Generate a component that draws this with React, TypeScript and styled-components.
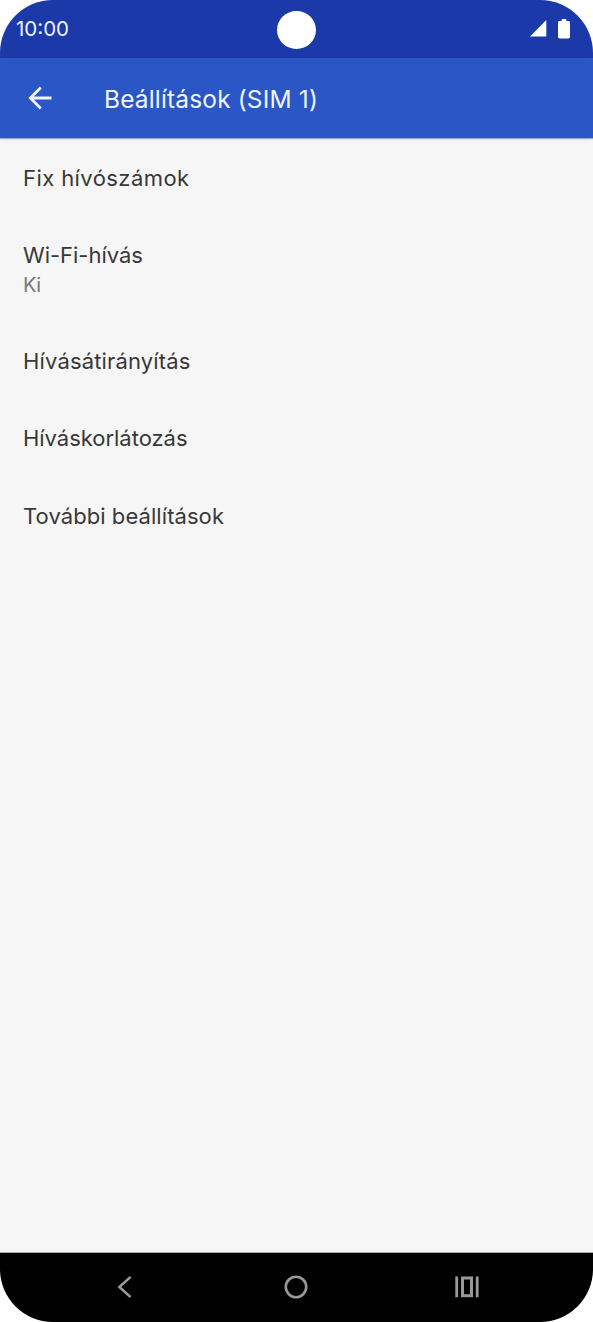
import React from "react";
import styled, { createGlobalStyle } from "styled-components";

interface MenuEntry {
  title: string;
  subtitle?: string;
  tracking: number;
}

const entries: MenuEntry[] = [
  { title: "Fix hívószámok", tracking: 0.42 },
  { title: "Wi-Fi-hívás", subtitle: "Ki", tracking: -0.02 },
  { title: "Hívásátirányítás", tracking: 0.15 },
  { title: "Híváskorlátozás", tracking: -0.03 },
  { title: "További beállítások", tracking: 0.07 },
];

export default function App() {
  return (
    <>
      <GlobalStyle />
      <Phone>
        <StatusBar>
          <Clock>10:00</Clock>
          <Camera />
          <StatusIcons>
            <svg width="17" height="17" viewBox="0 0 17 17" fill="#fff">
              <path d="M16.3 0V16.5H0Z" />
            </svg>
            <svg width="12" height="20" viewBox="0 0 12 20" fill="#fff">
              <path d="M3.7 0H8.3V2H10.6Q12 2 12 3.4V18Q12 19.4 10.6 19.4H1.4Q0 19.4 0 18V3.4Q0 2 1.4 2H3.7Z" />
            </svg>
          </StatusIcons>
        </StatusBar>

        <AppBar>
          <BackButton aria-label="Vissza">
            <svg width="24" height="24" viewBox="0 0 24 24" fill="none" stroke="#f0f5ff" strokeWidth="2.8">
              <path d="M23.5 12H3M12.8 1.6L2.4 12L12.8 22.4" />
            </svg>
          </BackButton>
          <Title>Beállítások (SIM 1)</Title>
        </AppBar>

        <Menu>
          {entries.map((entry) => (
            <MenuItem key={entry.title}>
              <ItemTitle $tracking={entry.tracking}>{entry.title}</ItemTitle>
              {entry.subtitle && <ItemSubtitle>{entry.subtitle}</ItemSubtitle>}
            </MenuItem>
          ))}
        </Menu>

        <NavBar>
          <NavButton aria-label="Vissza">
            <svg width="16" height="24" viewBox="0 0 16 24" fill="none" stroke="#999" strokeWidth="2.6">
              <path d="M13.6 1.9L2.4 12L13.6 22.1" />
            </svg>
          </NavButton>
          <NavButton aria-label="Kezdőlap">
            <svg width="24" height="24" viewBox="0 0 24 24" fill="none" stroke="#999" strokeWidth="2.6">
              <circle cx="12" cy="12" r="10.2" />
            </svg>
          </NavButton>
          <NavButton aria-label="Áttekintés">
            <svg width="24" height="22" viewBox="0 0 24 22" fill="none" stroke="#999">
              <path d="M1.7 0.5V21.2M22.2 0.5V21.2" strokeWidth="2.8" />
              <rect x="7.5" y="2" width="9" height="17.7" strokeWidth="3" />
            </svg>
          </NavButton>
        </NavBar>
      </Phone>
    </>
  );
}

const GlobalStyle = createGlobalStyle`
  body {
    margin: 0;
    background: #fff;
    font-family: Inter, "Open Sans", sans-serif;
  }
`;

const Phone = styled.div`
  display: flex;
  flex-direction: column;
  width: 593px;
  height: 1322px;
  overflow: hidden;
  border-radius: 53px;
  background: #f6f6f6;
`;

const StatusBar = styled.header`
  display: grid;
  grid-template-columns: 1fr 39px 1fr;
  align-items: center;
  flex: none;
  box-sizing: border-box;
  height: 58px;
  padding: 0 23px 0 16px;
  background: #1c39a9;
`;

const Clock = styled.span`
  font-size: 20.5px;
  line-height: 24px;
  color: #eef3ff;
`;

const Camera = styled.div`
  width: 39px;
  height: 38px;
  margin: 1px 0 0 3.5px;
  border-radius: 50%;
  background: #fff;
`;

const StatusIcons = styled.div`
  display: flex;
  align-items: center;
  justify-content: flex-end;
  gap: 11px;
  margin-top: -1px;
`;

const AppBar = styled.div`
  z-index: 1;
  display: flex;
  align-items: center;
  flex: none;
  height: 80px;
  background: #2a56c6;
  box-shadow: 0 1px 1px rgba(42, 70, 140, 0.4), 0 2px 5px rgba(0, 0, 0, 0.06);
`;

const BackButton = styled.button`
  display: flex;
  width: 77px;
  padding: 0 0 0 28px;
  border: none;
  background: none;
`;

const Title = styled.h1`
  margin: 2px 0 0 27px;
  font-size: 24.5px;
  font-weight: 400;
  line-height: 32px;
  letter-spacing: 0.15px;
  color: #f0f5ff;
`;

const Menu = styled.ul`
  flex: 1;
  margin: 0;
  padding: 0.5px 0 0;
  list-style: none;
`;

const MenuItem = styled.li`
  display: flex;
  flex-direction: column;
  align-items: flex-start;
  padding: 24px 23px 23.5px;
`;

const ItemTitle = styled.span<{ $tracking: number }>`
  font-size: 22px;
  line-height: 30px;
  letter-spacing: ${(props) => props.$tracking}px;
  color: #383838;
`;

const ItemSubtitle = styled.span`
  margin: 1px 0 -1px;
  font-size: 20px;
  line-height: 28px;
  letter-spacing: -0.4px;
  color: #777;
`;

const NavBar = styled.nav`
  display: grid;
  grid-template-columns: repeat(3, 171px);
  justify-content: center;
  flex: none;
  box-sizing: border-box;
  height: 70px;
  padding: 0 1px 1px 0;
  border-top: 1px solid #aaa;
  background: #000;
`;

const NavButton = styled.button`
  display: flex;
  align-items: center;
  justify-content: center;
  padding: 0;
  border: none;
  background: none;
`;
